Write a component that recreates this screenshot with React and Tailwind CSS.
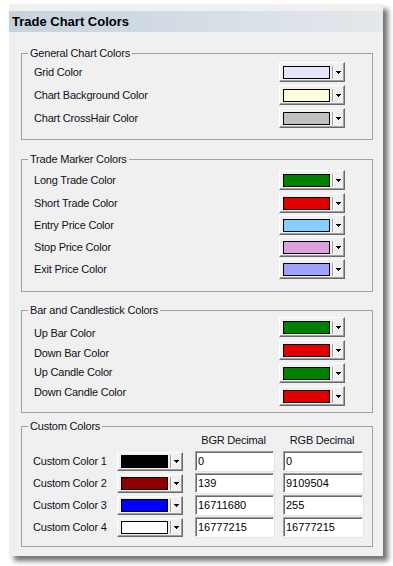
const GENERAL = [
  { label: 'Grid Color', color: '#e6e6fa' },
  { label: 'Chart Background Color', color: '#ffffe0' },
  { label: 'Chart CrossHair Color', color: '#c0c0c0' },
];

const TRADE = [
  { label: 'Long Trade Color', color: '#008000', gap: 'mt-0' },
  { label: 'Short Trade Color', color: '#e00000', gap: 'mt-[3px]' },
  { label: 'Entry Price Color', color: '#87cefa', gap: 'mt-[2px]' },
  { label: 'Stop Price Color', color: '#dda0dd', gap: 'mt-[2px]' },
  { label: 'Exit Price Color', color: '#a0a0ff', gap: 'mt-[2px]' },
];

const BARS = [
  { label: 'Up Bar Color', color: '#008000' },
  { label: 'Down Bar Color', color: '#e00000' },
  { label: 'Up Candle Color', color: '#008000' },
  { label: 'Down Candle Color', color: '#e00000' },
];

const CUSTOM = [
  { label: 'Custom Color 1', color: '#000000', bgr: '0', rgb: '0' },
  { label: 'Custom Color 2', color: '#8b0000', bgr: '139', rgb: '9109504' },
  { label: 'Custom Color 3', color: '#0000ff', bgr: '16711680', rgb: '255' },
  { label: 'Custom Color 4', color: '#ffffff', bgr: '16777215', rgb: '16777215' },
];

const font = { fontFamily: '"Liberation Sans", Arial, sans-serif' };

function DropArrow() {
  return (
    <svg width="5" height="3" viewBox="0 0 5 3" shapeRendering="crispEdges">
      <rect x="0" y="0" width="5" height="1" fill="#000" />
      <rect x="1" y="1" width="3" height="1" fill="#000" />
      <rect x="2" y="2" width="1" height="1" fill="#000" />
    </svg>
  );
}

// color picker combo, the old winforms look
function ColorButton({ color, short }) {
  return (
    <div
      className={`flex items-center w-[66px] ${short ? 'h-[19px]' : 'h-[20px]'} bg-[#f0f0f0] border border-t-white border-l-white border-r-[#696969] border-b-[#696969] shadow-[inset_-1px_-1px_0_#a0a0a0] pl-[3px] shrink-0`}
    >
      <div className="w-[47px] h-[13px] border border-black" style={{ backgroundColor: color }} />
      <div className="ml-[2px] w-[2px] h-[13px] border-l border-l-[#a0a0a0] border-r border-r-white" />
      <div className="flex-1 flex justify-center pr-[1px]">
        <DropArrow />
      </div>
    </div>
  );
}

function TextBox({ value, wide }) {
  return (
    <div
      className={`${wide ? 'w-[80px]' : 'w-[79px]'} h-[20px] bg-white border border-t-[#a0a0a0] border-l-[#a0a0a0] border-r-white border-b-white shadow-[inset_1px_1px_0_#696969,1px_1px_0_#e3e3e3] pl-[2px] text-[11px] leading-[18px] text-black`}
    >
      {value}
    </div>
  );
}

function Group({ title, className, children }) {
  return (
    <fieldset className={`ml-[12px] mr-[10px] border border-[#a0a0a0] ${className}`}>
      <legend className="ml-[6px] px-[2px] text-[11px] leading-[13px] h-[13px] tracking-[-0.2px] text-[#111122]">
        {title}
      </legend>
      {children}
    </fieldset>
  );
}

export default function App() {
  return (
    <div className="w-[393px] h-[566px] bg-white overflow-hidden pt-[4px] pl-[9px]" style={font}>
      <div className="w-[374px] bg-[#f0f0f0] pt-[7px] pb-[9px] shadow-[5px_5px_5px_rgba(0,0,0,0.55)]">
        <div className="h-[21px] bg-gradient-to-r from-[#c6d2de] to-[#e4e8ec] pl-[3px] flex items-center">
          <span className="text-[13px] font-bold text-black leading-none">Trade Chart Colors</span>
        </div>

        {/* General */}
        <Group title="General Chart Colors" className="mt-[15px]">
          <div className="flex flex-col gap-[3px] pt-[2px] pb-[11px] pl-[12px] pr-[27px]">
            {GENERAL.map((row) => (
              <div key={row.label} className="flex items-center justify-between h-[20px]">
                <span className="text-[11px] tracking-[-0.2px] text-[#111122]">{row.label}</span>
                <ColorButton color={row.color} />
              </div>
            ))}
          </div>
        </Group>

        {/* Trade markers */}
        <Group title="Trade Marker Colors" className="mt-[13px]">
          <div className="flex flex-col pt-[4px] pb-[12px] pl-[12px] pr-[27px]">
            {TRADE.map((row) => (
              <div key={row.label} className={`flex items-center justify-between h-[20px] ${row.gap}`}>
                <span className="text-[11px] tracking-[-0.2px] text-[#111122]">{row.label}</span>
                <ColorButton color={row.color} />
              </div>
            ))}
          </div>
        </Group>

        {/* Bars - labels and buttons don't line up in the original dialog */}
        <Group title="Bar and Candlestick Colors" className="mt-[12px]">
          <div className="flex justify-between pb-[6px] pl-[12px] pr-[27px]">
            <div className="flex flex-col pt-[7px]">
              {BARS.map((row) => (
                <span key={row.label} className="text-[11px] leading-[19.5px] tracking-[-0.2px] text-[#111122]">
                  {row.label}
                </span>
              ))}
            </div>
            <div className="flex flex-col gap-[3px]">
              {BARS.map((row) => (
                <ColorButton key={row.label} color={row.color} />
              ))}
            </div>
          </div>
        </Group>

        {/* Custom */}
        <Group title="Custom Colors" className="mt-[7px]">
          <div className="flex flex-col pb-[9px] pl-[11px]">
            <div className="flex h-[15px] items-center text-[11px] tracking-[-0.2px] text-[#111122]">
              <div className="w-[161px] shrink-0" />
              <div className="w-[79px] text-center">BGR Decimal</div>
              <div className="w-[9px]" />
              <div className="w-[80px] text-center">RGB Decimal</div>
            </div>
            <div className="flex flex-col gap-[2px] mt-[3px]">
              {CUSTOM.map((row) => (
                <div key={row.label} className="flex items-center h-[20px]">
                  <span className="w-[84px] shrink-0 text-[11px] tracking-[-0.2px] text-[#111122]">{row.label}</span>
                  <ColorButton color={row.color} short />
                  <div className="ml-[12px]">
                    <TextBox value={row.bgr} />
                  </div>
                  <div className="ml-[9px]">
                    <TextBox value={row.rgb} wide />
                  </div>
                </div>
              ))}
            </div>
          </div>
        </Group>
      </div>
    </div>
  );
}
